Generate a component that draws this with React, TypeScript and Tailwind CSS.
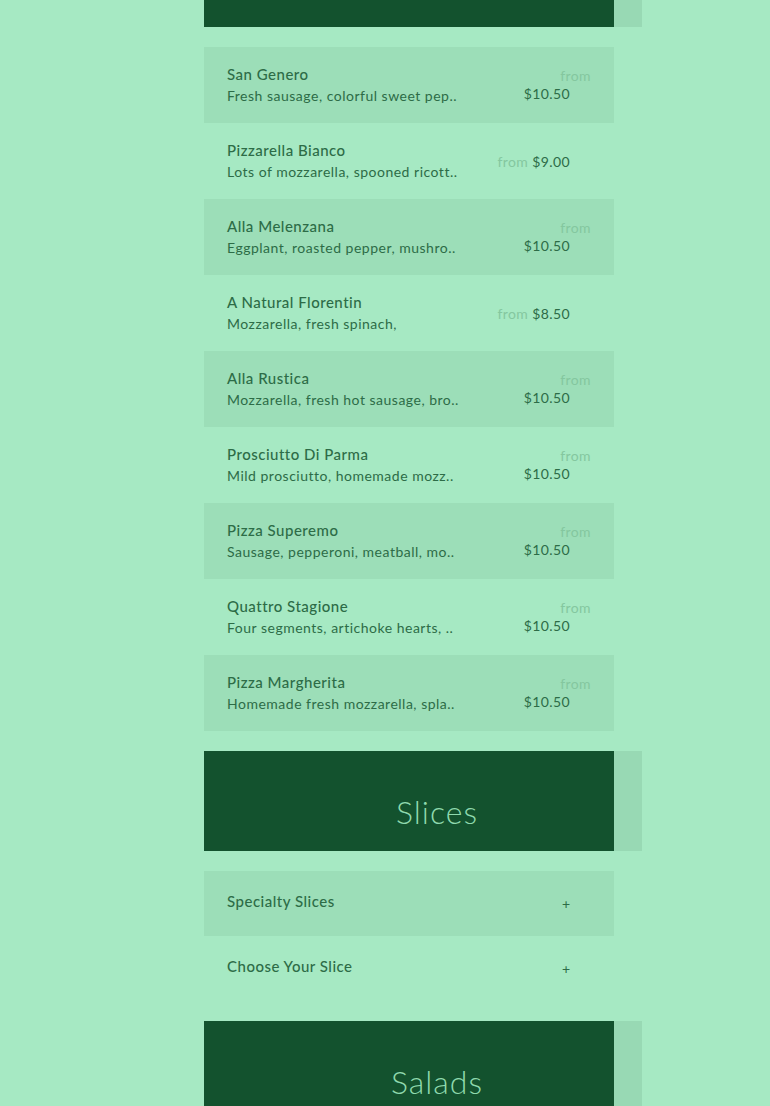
import React from "react";

type Item = {
  name: string;
  desc: string;
  price: string;
  inline?: boolean;
};

const pizzas: Item[] = [
  { name: "San Genero", desc: "Fresh sausage, colorful sweet pep..", price: "$10.50" },
  { name: "Pizzarella Bianco", desc: "Lots of mozzarella, spooned ricott..", price: "$9.00", inline: true },
  { name: "Alla Melenzana", desc: "Eggplant, roasted pepper, mushro..", price: "$10.50" },
  { name: "A Natural Florentin", desc: "Mozzarella, fresh spinach,", price: "$8.50", inline: true },
  { name: "Alla Rustica", desc: "Mozzarella, fresh hot sausage, bro..", price: "$10.50" },
  { name: "Prosciutto Di Parma", desc: "Mild prosciutto, homemade mozz..", price: "$10.50" },
  { name: "Pizza Superemo", desc: "Sausage, pepperoni, meatball, mo..", price: "$10.50" },
  { name: "Quattro Stagione", desc: "Four segments, artichoke hearts, ..", price: "$10.50" },
  { name: "Pizza Margherita", desc: "Homemade fresh mozzarella, spla..", price: "$10.50" },
];

const SectionHeader: React.FC<{ title: string; className?: string; textClass?: string }> = ({
  title,
  className = "",
  textClass = "pt-[22px]",
}) => (
  <div className={`flex h-[100px] ${className}`}>
    <div className={`w-[410px] bg-[#13522e] flex items-center justify-center pl-[56px] ${textClass}`}>
      <span className="text-[32px] font-light text-[#8fd9ad] tracking-[1px]">
        {title}
      </span>
    </div>
    <div className="w-[28px] bg-[#98d9b4]" />
  </div>
);

const MenuRow: React.FC<{ item: Item; shaded: boolean }> = ({ item, shaded }) => (
  <div
    className={`w-[410px] h-[76px] flex items-center pl-[23px] pr-[23px] ${
      shaded ? "bg-[#9cdeb8]" : ""
    }`}
  >
    <div className="flex flex-col whitespace-nowrap text-[#2d6c47]">
      <span className="text-[15px] leading-[21px] font-medium tracking-[0.5px]">
        {item.name}
      </span>
      <span className="text-[14px] leading-[21px] tracking-[0.5px]">{item.desc}</span>
    </div>
    {item.inline ? (
      <div className="ml-auto mr-[21px] text-[14px] whitespace-nowrap tracking-[0.4px]">
        <span className="text-[#84c79f]">from</span>{" "}
        <span className="text-[#2d6c47]">{item.price}</span>
      </div>
    ) : (
      <div className="ml-auto flex flex-col items-end text-[14px] leading-[18px] tracking-[0.4px]">
        <span className="text-[#84c79f]">from</span>
        <span className="text-[#2d6c47] mr-[21px]">{item.price}</span>
      </div>
    )}
  </div>
);

const AccordionRow: React.FC<{ title: string; shaded: boolean }> = ({
  title,
  shaded,
}) => (
  <div
    className={`w-[410px] h-[65px] flex items-center pl-[23px] pr-[44px] text-[#2d6c47] ${
      shaded ? "bg-[#9cdeb8]" : ""
    }`}
  >
    <span className="text-[15px] font-medium tracking-[0.5px] -mt-[4px]">{title}</span>
    <span className="ml-auto text-[14px]">+</span>
  </div>
);

const App: React.FC = () => {
  return (
    <div className="min-h-screen bg-[#a6e9c3] font-['Lato',sans-serif] overflow-hidden">
      <div className="ml-[204px] w-[438px] -mt-[73px] flex flex-col">
        <SectionHeader title="Specialty Pizzas" textClass="pt-[10px]" />

        <div className="mt-5 flex flex-col">
          {pizzas.map((item, i) => (
            <MenuRow key={item.name} item={item} shaded={i % 2 === 0} />
          ))}
        </div>

        <SectionHeader title="Slices" className="mt-5" />

        <div className="mt-5 flex flex-col">
          <AccordionRow title="Specialty Slices" shaded />
          <AccordionRow title="Choose Your Slice" shaded={false} />
        </div>

        <SectionHeader title="Salads" className="mt-5" />
      </div>
    </div>
  );
};

export default App;
